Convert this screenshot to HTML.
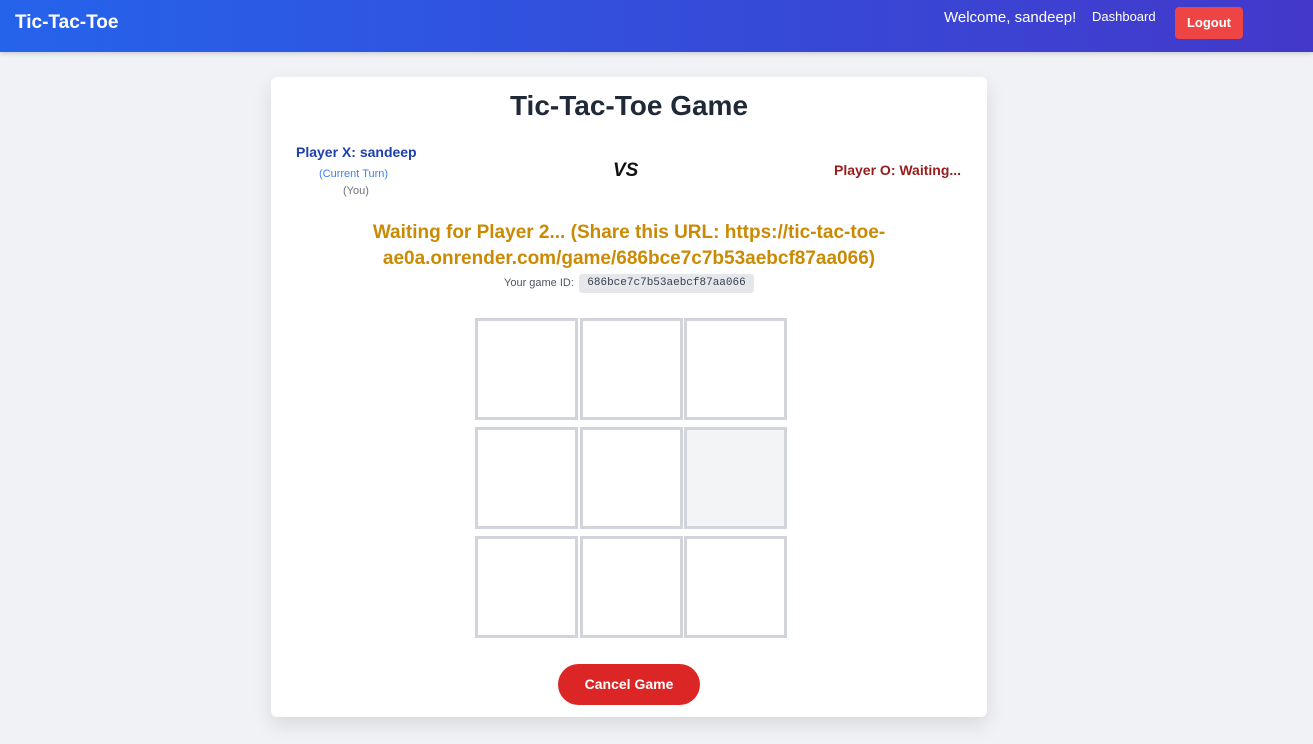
<!DOCTYPE html>
<html><head><style>
*{box-sizing:border-box;margin:0;padding:0}
body{width:1313px;height:744px;background:#f0f2f5;font-family:"Liberation Sans",sans-serif;position:relative;overflow:hidden}
.nav{position:absolute;left:0;top:0;width:1313px;height:52px;background:linear-gradient(90deg,#2563eb,#4338ca);box-shadow:0 2px 4px rgba(0,0,0,.15)}
.abs{position:absolute;white-space:nowrap}
.card{position:absolute;left:271px;top:77px;width:716px;height:640px;background:#fff;border-radius:6px;box-shadow:0 8px 20px rgba(0,0,0,.1)}
.cell{position:absolute;width:103px;height:102px;border:3px solid #d1d5db;background:#fff}
</style></head><body>
<div class="nav">
<div class="abs" style="left:15px;top:12px;color:#fff;font-size:19px;font-weight:bold">Tic-Tac-Toe</div>
<div class="abs" style="left:944px;top:9px;color:#fff;font-size:15px">Welcome, sandeep!</div>
<div class="abs" style="left:1092px;top:9px;color:#fff;font-size:13px">Dashboard</div>
<div class="abs" style="left:1175px;top:7px;width:68px;height:32px;background:#ef4444;border-radius:4px;color:#fff;font-size:13px;font-weight:bold;text-align:center;line-height:32px">Logout</div>
</div>
<div class="card"></div>
<div class="abs" style="left:271px;width:716px;top:90px;text-align:center;font-size:28px;font-weight:bold;color:#1f2937">Tic-Tac-Toe Game</div>
<div class="abs" style="left:296px;top:144px;font-size:14px;font-weight:bold;color:#1e40af">Player X: sandeep</div>
<div class="abs" style="left:319px;top:168px;font-size:11px;color:#3b82f6">(Current Turn)</div>
<div class="abs" style="left:343px;top:185px;font-size:11px;color:#6b7280">(You)</div>
<div class="abs" style="left:613px;top:160px;font-size:19px;font-weight:bold;font-style:italic;color:#111">VS</div>
<div class="abs" style="left:834px;top:162px;font-size:14px;font-weight:bold;color:#991b1b">Player O: Waiting...</div>
<div class="abs" style="left:271px;width:716px;top:220px;text-align:center;font-size:19px;font-weight:bold;color:#ca8a04;line-height:26px">Waiting for Player 2... (Share this URL: https://tic-tac-toe-<br>ae0a.onrender.com/game/686bce7c7b53aebcf87aa066)</div>
<div class="abs" style="left:504px;top:277px;font-size:11px;color:#4b5563">Your game ID:</div>
<div class="abs" style="left:579px;top:274px;width:175px;height:19px;background:#e5e7eb;border-radius:3px;font-family:'Liberation Mono',monospace;font-size:11px;color:#374151;text-align:center;line-height:19px">686bce7c7b53aebcf87aa066</div>
<div class="cell" style="left:475px;top:318px"></div>
<div class="cell" style="left:580px;top:318px"></div>
<div class="cell" style="left:684px;top:318px"></div>
<div class="cell" style="left:475px;top:427px"></div>
<div class="cell" style="left:580px;top:427px"></div>
<div class="cell" style="left:684px;top:427px;background:#f3f4f6"></div>
<div class="cell" style="left:475px;top:536px"></div>
<div class="cell" style="left:580px;top:536px"></div>
<div class="cell" style="left:684px;top:536px"></div>
<div class="abs" style="left:558px;top:664px;width:142px;height:41px;background:#dc2626;border-radius:21px;color:#fff;font-size:14px;font-weight:bold;text-align:center;line-height:41px">Cancel Game</div>
</body></html>
